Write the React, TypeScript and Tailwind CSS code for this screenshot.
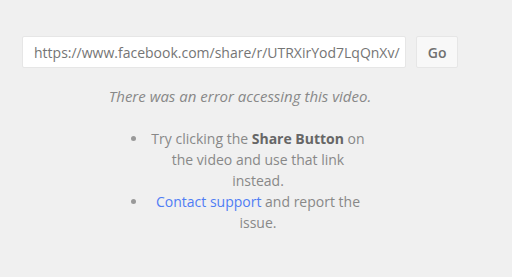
export default function App() {
  return (
    <div className="min-h-screen w-full bg-[#f0f0f0] font-['Open_Sans',sans-serif]">
      <div className="w-[480px] px-[22px] pt-[36px]">
        <div className="flex items-center gap-[10px]">
          <input
            readOnly
            value="https://www.facebook.com/share/r/UTRXirYod7LqQnXv/"
            className="h-[32px] w-[386px] rounded-[2px] border border-[#e6e6e6] bg-white pl-[11px] pr-[2px] text-[14px] text-[#757575] outline-none"
          />
          <button className="h-[32px] w-[42px] rounded-[2px] border border-[#e6e6e6] bg-[#f8f8f8] text-[14px] font-semibold text-[#707070]">
            Go
          </button>
        </div>
        <p className="mt-[18px] text-center text-[15px] italic leading-[20px] text-[#888]">
          There was an error accessing this video.
        </p>
        <ul className="mx-auto mt-[22px] w-[256px] list-disc pl-[36px] text-center text-[14px] leading-[21px] text-[#888] marker:text-[#999]">
          <li>
            Try clicking the <b className="font-bold text-[#666]">Share Button</b> on the video and use that link instead.
          </li>
          <li>
            <a className="text-[#4f7df5]">Contact support</a> and report the issue.
          </li>
        </ul>
      </div>
    </div>
  )
}
